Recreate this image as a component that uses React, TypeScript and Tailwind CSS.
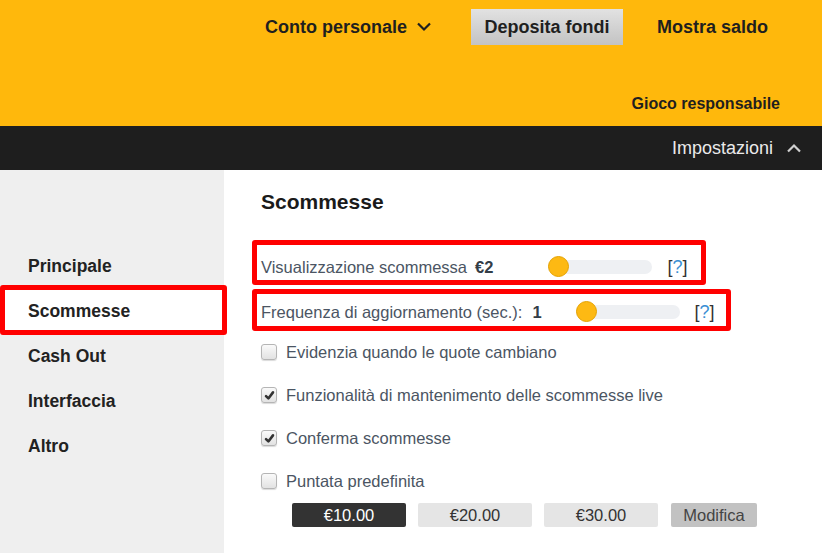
const sections = ["Principale", "Scommesse", "Cash Out", "Interfaccia", "Altro"];

const options = [
  { label: "Evidenzia quando le quote cambiano", checked: false },
  { label: "Funzionalità di mantenimento delle scommesse live", checked: true },
  { label: "Conferma scommesse", checked: true },
  { label: "Puntata predefinita", checked: false },
];

const stakes = ["€10.00", "€20.00", "€30.00"];

function Chevron({ up, className }: { up?: boolean; className?: string }) {
  return (
    <svg viewBox="0 0 16 10" className={className} fill="none" stroke="currentColor" strokeWidth="2.2">
      {up ? <path d="M2 8.5 8 2.5l6 6" /> : <path d="M2 1.5 8 7.5l6-6" />}
    </svg>
  );
}

function Checkbox({ checked }: { checked: boolean }) {
  return (
    <span className="flex h-[16px] w-[16px] shrink-0 items-center justify-center rounded-[3px] border border-[#b5b5b5] bg-gradient-to-b from-[#fafafa] to-[#e2e2e2] shadow-[0_1px_1px_rgba(0,0,0,0.15)]">
      {checked && (
        <svg viewBox="0 0 12 12" className="h-[11px] w-[11px]" fill="none" stroke="#333" strokeWidth="2.8" strokeLinecap="round" strokeLinejoin="round">
          <path d="M2.2 6.6 4.8 9.2 9.8 2.6" />
        </svg>
      )}
    </span>
  );
}

function Slider({ className }: { className?: string }) {
  return (
    <span className={`relative block h-[14px] w-[104px] shrink-0 rounded-full bg-[#eef0f3] ${className ?? ""}`}>
      <span className="absolute -top-[4px] left-0 h-[21px] w-[21px] rounded-full border border-[#e5a200] bg-[#fdb913]" />
    </span>
  );
}

function Help({ className }: { className?: string }) {
  return (
    <span className={`text-[18px] text-[#333] ${className ?? ""}`}>
      [<span className="text-[#3a8fd4]">?</span>]
    </span>
  );
}

export default function App() {
  return (
    <div className="flex h-[553px] w-[822px] flex-col overflow-hidden bg-white font-['Liberation_Sans',Arial,sans-serif]">
      <header className="flex h-[126px] flex-col bg-[#ffb80c]">
        <div className="flex h-[54px] items-center justify-end pr-[54px] text-[18px] font-bold text-[#1f1f1f]">
          <button className="flex items-center">
            Conto personale
            <Chevron className="ml-[9px] h-[10px] w-[16px]" />
          </button>
          <button className="ml-[39px] h-[36px] w-[152px] bg-gradient-to-b from-[#e2e2e2] to-[#c3c3c3]">
            Deposita fondi
          </button>
          <span className="ml-[34px]">Mostra saldo</span>
        </div>
        <div className="mt-auto flex h-[44px] items-center justify-end pr-[42px] text-[16px] font-bold text-[#1f1f1f]">
          Gioco responsabile
        </div>
      </header>

      <div className="flex h-[44px] items-center justify-end bg-[#1e1e1e] pr-[20px]">
        <span className="text-[18px] text-[#eaeaea]">Impostazioni</span>
        <Chevron up className="ml-[13px] h-[10px] w-[16px] text-[#cfcfcf]" />
      </div>

      <div className="flex flex-1">
        <nav className="w-[224px] shrink-0 bg-[#efefef] pt-[74px]">
          {sections.map((s) => (
            <div
              key={s}
              className={`relative flex h-[45px] items-center pl-[28px] text-[17.5px] font-bold text-[#222] ${
                s === "Scommesse" ? "bg-white" : ""
              }`}
            >
              {s}
              {s === "Scommesse" && (
                <span className="absolute -top-[4px] -right-[3px] -bottom-[1px] left-0 rounded-[3px] border-[5px] border-[#ff0000]" />
              )}
            </div>
          ))}
        </nav>

        <main className="flex-1 pl-[37px] pt-[20px] text-[16.5px] text-[#4b5563]">
          <h2 className="flex h-[24px] items-center text-[21px] font-bold text-[#1a1a1a]">Scommesse</h2>

          <div className="relative mt-[33px] flex h-[40px] items-center">
            <span>Visualizzazione scommessa</span>
            <span className="ml-[8px] font-bold text-[#333d47]">€2</span>
            <Slider className="ml-[55px]" />
            <Help className="ml-[15px]" />
            <span className="absolute -top-[7px] -left-[9px] h-[45px] w-[454px] rounded-[3px] border-[5px] border-[#ff0000]" />
          </div>

          <div className="relative mt-[5px] flex h-[40px] items-center">
            <span>Frequenza di aggiornamento (sec.):</span>
            <span className="ml-[10px] font-bold text-[#333d47]">1</span>
            <Slider className="ml-[34px]" />
            <Help className="ml-[15px]" />
            <span className="absolute -top-[3px] -left-[9px] h-[42px] w-[479px] rounded-[3px] border-[5px] border-[#ff0000]" />
          </div>

          <div className="flex flex-col gap-[3px]">
            {options.map((o) => (
              <label key={o.label} className="flex h-[40px] items-center">
                <Checkbox checked={o.checked} />
                <span className="ml-[9px]">{o.label}</span>
              </label>
            ))}
          </div>

          <div className="mt-[2px] ml-[31px] flex gap-[12px] text-[16.5px]">
            {stakes.map((s, i) => (
              <button
                key={s}
                className={`h-[24px] w-[114px] rounded-[2px] ${
                  i === 0 ? "bg-[#333] text-white" : "bg-[#e5e5e5] text-[#333]"
                }`}
              >
                {s}
              </button>
            ))}
            <button className="ml-[1px] h-[24px] w-[86px] rounded-[2px] bg-[#c2c2c2] text-[#444]">Modifica</button>
          </div>
        </main>
      </div>
    </div>
  );
}
